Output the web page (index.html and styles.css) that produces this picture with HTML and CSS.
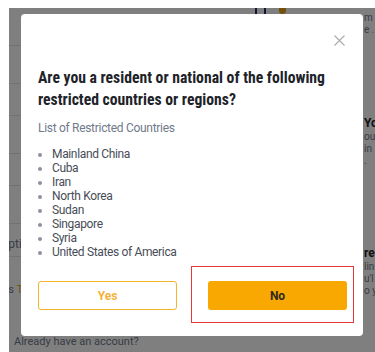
FILE: index.html
```html
<!DOCTYPE html>
<html lang="en">
  <head>
    <meta charset="UTF-8" />
    <meta name="viewport" content="width=device-width, initial-scale=1.0" />
    <title>Restricted countries</title>
    <link rel="stylesheet" href="styles.css">
  </head>
  <body>
    <div class="page">
      <div class="bg">
        <div class="bg-left">
          <div class="logo">
            <span class="bar"></span>
            <span class="bar"></span>
            <span class="dot"></span>
          </div>
          <div class="row short"></div>
          <div class="row"></div>
          <div class="row short"></div>
          <div class="row"></div>
          <div class="row short"></div>
          <div class="row"></div>
          <div class="row text-row"><span class="cut">Options</span></div>
          <div class="terms"><span class="cut-s">Users</span> <span class="link">Terms</span></div>
          <div class="account">Already have an account?</div>
        </div>
        <div class="bg-right">
          <p class="small">m</p>
          <p class="small">e <span class="link">.</span></p>
          <p class="title">Your</p>
          <p class="small">ou</p>
          <p class="small">in</p>
          <p class="small">.</p>
          <p class="title lower">re</p>
          <p class="small">lin</p>
          <p class="small">u'l</p>
          <p class="small">o y</p>
        </div>
      </div>

      <div class="overlay">
        <div class="modal">
          <div class="modal-head">
            <button class="close" aria-label="Close">
              <svg width="11" height="11" viewBox="0 0 11 11">
                <path d="M0.5 0.5L10.5 10.5M10.5 0.5L0.5 10.5" stroke="#a7aab0" stroke-width="1.1" fill="none"/>
              </svg>
            </button>
          </div>
          <h2 class="question">Are you a resident or national of the following restricted countries or regions?</h2>
          <p class="list-title">List of Restricted Countries</p>
          <ul class="countries">
            <li>Mainland China</li>
            <li>Cuba</li>
            <li>Iran</li>
            <li>North Korea</li>
            <li>Sudan</li>
            <li>Singapore</li>
            <li>Syria</li>
            <li>United States of America</li>
          </ul>
          <div class="actions">
            <button class="btn btn-yes">Yes</button>
            <div class="mark">
              <button class="btn btn-no">No</button>
            </div>
          </div>
        </div>
      </div>
    </div>
  </body>
</html>
```

FILE: styles.css
```css
* {
  margin: 0;
  padding: 0;
  box-sizing: border-box;
}

body {
  margin: 8px 0 0 9px;
  font-family: Roboto, "Noto Sans", sans-serif;
  background: #fff;
}

.page {
  position: relative;
  height: 344px;
  overflow: hidden;
}

.bg {
  display: flex;
  height: 100%;
  background: #fff;
  color: #1e2329;
}

.bg-left {
  width: 354px;
  overflow: hidden;
}

.logo {
  display: flex;
  gap: 7px;
  height: 6px;
  margin-left: 246px;
}

.logo .bar {
  width: 2px;
  height: 6px;
  background: #1b2a6b;
}

.logo .dot {
  width: 7px;
  height: 6px;
  margin-left: 6px;
  border-radius: 0 0 4px 4px;
  background: #e8a317;
}

.row {
  height: 38px;
  border-bottom: 1px solid #e3e5e8;
}

.row:first-of-type {
  height: 7px;
}

.row.short {
  height: 32px;
}

.text-row {
  height: 33px;
  font-size: 12px;
  color: #707a8a;
  padding-top: 13px;
}

.cut {
  margin-left: -9px;
}

.terms {
  margin-top: 26px;
  font-size: 11px;
  color: #707a8a;
  white-space: nowrap;
}

.cut-s {
  margin-left: -23px;
}

.link {
  color: #e4a20e;
}

.account {
  margin-top: 39px;
  margin-left: 5px;
  font-size: 11px;
  color: #707a8a;
}

.bg-right {
  flex: 1;
  overflow: hidden;
  padding-left: 1px;
  white-space: nowrap;
}

.bg-right .small {
  font-size: 10px;
  color: #707a8a;
  line-height: 12px;
}

.bg-right .small:first-child {
  margin-top: 4px;
}

.bg-right .title {
  margin-top: 79px;
  font-size: 12px;
  font-weight: 700;
  line-height: 16px;
}

.bg-right .title.lower {
  margin-top: 78px;
}

.overlay {
  position: absolute;
  inset: 0;
  background: rgba(0, 0, 0, 0.5);
  padding: 6px 0 0 12px;
}

.modal {
  width: 342px;
  height: 322px;
  background: #fff;
  border-radius: 4px;
  padding: 0 16px 0 17px;
}

.modal-head {
  display: flex;
  justify-content: flex-end;
  padding-top: 21px;
  padding-right: 2px;
}

.close {
  border: none;
  background: none;
  width: 11px;
  height: 11px;
  display: flex;
  cursor: pointer;
}

.question {
  margin-top: 21px;
  font-family: "Liberation Sans Narrow", "Roboto Condensed", Roboto, sans-serif;
  font-size: 15.7px;
  font-weight: 700;
  line-height: 22px;
  color: #1e2329;
}

.list-title {
  margin-top: 8px;
  font-size: 12px;
  line-height: 18px;
  letter-spacing: -0.3px;
  color: #707a8a;
}

.countries {
  margin-top: 10px;
  padding-left: 14px;
  font-size: 12px;
  line-height: 14px;
  letter-spacing: -0.35px;
  color: #474d57;
}

.countries li::marker {
  color: #8d939c;
}

.actions {
  display: grid;
  grid-template-columns: 139px 139px;
  gap: 31px;
  margin-top: 22px;
}

.btn {
  height: 29px;
  border-radius: 3px;
  font-family: inherit;
  font-size: 12px;
  font-weight: 700;
  cursor: pointer;
}

.btn-yes {
  background: #fff;
  border: 1px solid #f5b42a;
  color: #f3b239;
}

.btn-no {
  width: 100%;
  background: #f8a800;
  border: none;
  color: #2f2a1d;
}

.mark {
  position: relative;
}

.mark::after {
  content: "";
  position: absolute;
  left: -17px;
  right: -7px;
  top: -15px;
  bottom: -13px;
  border: 1.5px solid #e5383b;
  pointer-events: none;
}
```
